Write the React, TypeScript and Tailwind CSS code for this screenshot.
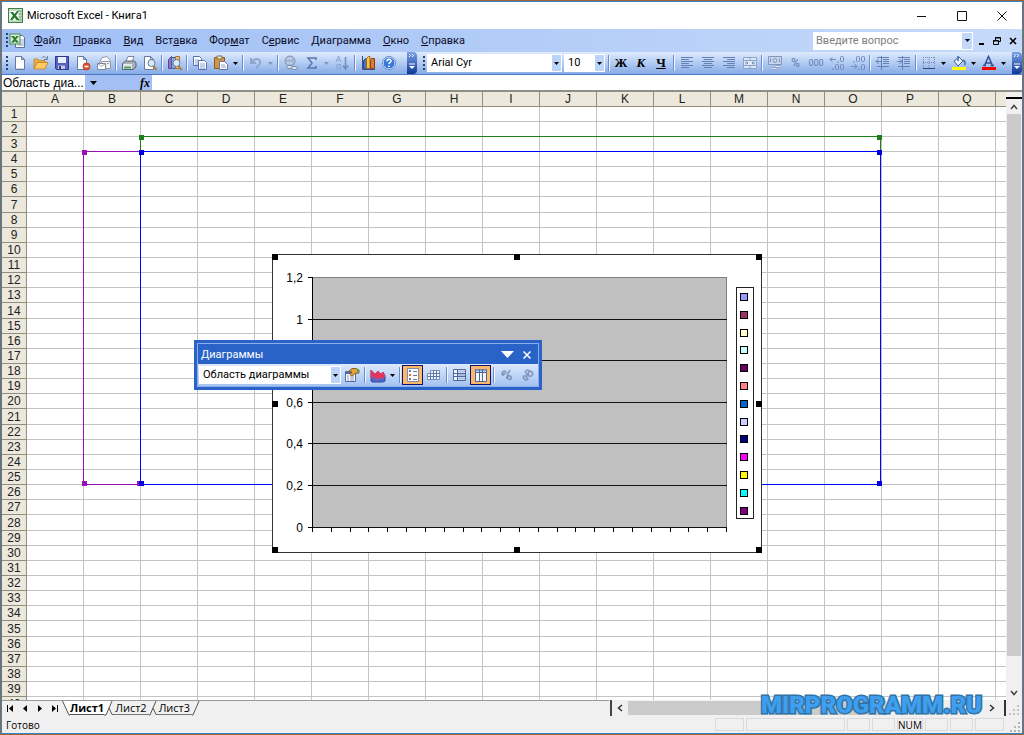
import { useState } from "react";
import type { ReactNode } from "react";

const columns = "ABCDEFGHIJKLMNOPQ".split("");
const rows = Array.from({ length: 40 }, (_, i) => i + 1);

// Every menu has one underlined access key
const menus = [
  { before: "", key: "Ф", after: "айл" },
  { before: "", key: "П", after: "равка" },
  { before: "", key: "В", after: "ид" },
  { before: "Вст", key: "а", after: "вка" },
  { before: "Фор", key: "м", after: "ат" },
  { before: "С", key: "е", after: "рвис" },
  { before: "", key: "Д", after: "иаграмма" },
  { before: "", key: "О", after: "кно" },
  { before: "", key: "С", after: "правка" },
];

const legendColors = [
  "#9999ff",
  "#993366",
  "#ffffcc",
  "#ccffff",
  "#660066",
  "#ff8080",
  "#0066cc",
  "#ccccff",
  "#000080",
  "#ff00ff",
  "#ffff00",
  "#00ffff",
  "#800080",
];

const axisLabels = [
  { text: "1,2", y: 24 },
  { text: "1", y: 66 },
  { text: "0,8", y: 107 },
  { text: "0,6", y: 149 },
  { text: "0,4", y: 190 },
  { text: "0,2", y: 232 },
  { text: "0", y: 274 },
];

const sheetNav = [
  { label: "Первый лист", arrow: "M7 1L3 4.500 7 8z", bar: "M1.500 1v7" },
  { label: "Предыдущий лист", arrow: "M6 1L2 4.500 6 8z", bar: "" },
  { label: "Следующий лист", arrow: "M2 1l4 3.500L2 8z", bar: "" },
  { label: "Последний лист", arrow: "M1 1l4 3.500L1 8z", bar: "M6.500 1v7" },
];

function Icon({ children }: { children: ReactNode }) {
  return (
    <svg width="16" height="16" viewBox="0 0 16 16" fill="none" aria-hidden="true">
      {children}
    </svg>
  );
}

function ToolButton({
  label,
  children,
  active,
}: {
  label: string;
  children: ReactNode;
  active?: boolean;
}) {
  return (
    <button
      type="button"
      aria-label={label}
      className={`flex h-5 w-[21px] shrink-0 items-center justify-center ${
        active ? "border border-[#10107a] bg-[#fdb765]" : ""
      }`}
    >
      {children}
    </button>
  );
}

function ArrowButton({ label, muted }: { label: string; muted?: boolean }) {
  return (
    <button
      type="button"
      aria-label={label}
      className={`flex h-5 w-[9px] shrink-0 items-center justify-center ${
        muted ? "text-[#8296b8]" : "text-black"
      }`}
    >
      <svg width="5" height="3" viewBox="0 0 5 3" aria-hidden="true">
        <path d="M0 0h5L2.500 3z" fill="currentColor" />
      </svg>
    </button>
  );
}

function Separator({ wide }: { wide?: boolean }) {
  return (
    <div className={`flex shrink-0 justify-center ${wide ? "w-[5px]" : "w-1"}`}>
      <div className="h-4 w-px bg-[#6a8ccb]" />
      <div className="h-4 w-px bg-[#f1f7ff]" />
    </div>
  );
}

function Gripper() {
  return (
    <svg width="3" height="15" viewBox="0 0 3 15" className="shrink-0" aria-hidden="true">
      <path
        d="M1 0v2M1 4v2M1 8v2M1 12v2"
        stroke="#27416f"
        strokeWidth="2"
      />
    </svg>
  );
}

function OverflowCap({ label }: { label: string }) {
  return (
    <button
      type="button"
      aria-label={label}
      className="flex h-full w-[10px] shrink-0 items-end justify-center rounded-r-sm bg-linear-to-b from-[#7ba2e7] to-[#0f3795] pb-1"
    >
      <svg width="6" height="16" viewBox="0 0 6 16" aria-hidden="true">
        <path d="M0 0l1.500 1.500L0 3M3 0l1.500 1.500L3 3" stroke="#fff" fill="none" />
        <path d="M0 10h6" stroke="#fff" />
        <path d="M0 12h6l-3 3z" fill="#fff" />
      </svg>
    </button>
  );
}

function ComboBox({
  label,
  options,
  className,
}: {
  label: string;
  options: string[];
  className: string;
}) {
  return (
    <div className={`relative h-[18px] shrink-0 bg-white ${className}`}>
      <select
        aria-label={label}
        className="block h-full w-full appearance-none bg-transparent pr-3 pl-1 text-[11px] leading-4 text-black outline-none"
      >
        {options.map((option) => (
          <option key={option}>{option}</option>
        ))}
      </select>
      <div className="pointer-events-none absolute inset-y-px right-px flex w-[9px] items-center justify-center bg-[#bcd4f8]">
        <svg width="5" height="3" viewBox="0 0 5 3" aria-hidden="true">
          <path d="M0 0h5L2.500 3z" />
        </svg>
      </div>
    </div>
  );
}

function ExcelLogo() {
  return (
    <svg width="15" height="15" viewBox="0 0 15 15" aria-hidden="true">
      <rect x="0.500" y="0.500" width="14" height="14" fill="#c5dcc4" stroke="#3f8149" />
      <path d="M10 3h4M10 6h4M10 9h4M10 12h4" stroke="#73a879" />
      <rect x="1.500" y="3" width="9" height="9" fill="#fff" />
      <path d="M2 4h3l1.500 2L9 3h2L8 7.500l3.500 4.500h-3L6.500 9.500 4.500 12H2l3-4.500z" fill="#227a32" />
    </svg>
  );
}

function Page() {
  return (
    <path
      d="M3.500 1.500h6l3 3v10h-9zM9.500 1.500v3h3"
      fill="#fff"
      stroke="#6579a3"
    />
  );
}

function Magnifier() {
  return (
    <>
      <path d="M11.500 11l3 4" stroke="#b8752d" strokeWidth="2" />
      <circle cx="9.500" cy="8" r="3.500" fill="#d5ebfb" stroke="#6b7a90" />
    </>
  );
}

function AlignIcon({ d }: { d: string }) {
  return (
    <Icon>
      <path d={d} stroke="#6580b4" />
    </Icon>
  );
}

function TitleBar() {
  return (
    <header className="flex h-[27px] items-center bg-white pl-[6px]">
      <ExcelLogo />
      <h1 className="ml-1 flex-1 text-[11px] leading-4 text-black">
        Microsoft Excel - Книга1
      </h1>
      <button type="button" aria-label="Свернуть" className="flex h-full w-10 items-center justify-center">
        <svg width="10" height="10" viewBox="0 0 10 10" aria-hidden="true">
          <path d="M0 5.500h9" stroke="#111" />
        </svg>
      </button>
      <button type="button" aria-label="Развернуть" className="flex h-full w-10 items-center justify-center">
        <svg width="10" height="10" viewBox="0 0 10 10" fill="none" aria-hidden="true">
          <path d="M0.500 0.500h9v9h-9z" stroke="#111" />
        </svg>
      </button>
      <button type="button" aria-label="Закрыть" className="flex h-full w-10 items-center justify-center">
        <svg width="10" height="10" viewBox="0 0 10 10" aria-hidden="true">
          <path d="M0.500 0.500l9 9M9.500 0.500l-9 9" stroke="#111" />
        </svg>
      </button>
    </header>
  );
}

function MenuBar() {
  return (
    <div className="flex h-[23px] items-center bg-linear-to-r from-[#a0bff5] to-[#c6dafa] pl-1">
      <Gripper />
      <svg width="17" height="16" viewBox="0 0 17 16" fill="none" aria-hidden="true">
        <path d="M6.500 2.500h7l2 2v10h-9z" fill="#fff" stroke="#5b719f" />
        <path d="M12 6v7M14 6v7M8 12h6" stroke="#9db0d3" />
        <rect x="1" y="1" width="10" height="10" fill="#d8ecd5" stroke="#4a8a54" />
        <path d="M2 3h3l1 1.500L7.500 3H10L7 6.200 10 9.500H7L6 8 5 9.500H2L4.800 6.200z" fill="#277a37" />
      </svg>
      <nav className="ml-2 flex flex-1 gap-3">
        {menus.map((menu) => (
          <button
            type="button"
            key={menu.key + menu.after}
            className="shrink-0 text-[11px] leading-4 text-[#0a0a28]"
          >
            {menu.before}
            <span className="underline">{menu.key}</span>
            {menu.after}
          </button>
        ))}
      </nav>
      <div className="flex h-[18px] w-[160px] bg-white">
        <input
          type="text"
          aria-label="Введите вопрос"
          placeholder="Введите вопрос"
          className="min-w-0 flex-1 pl-[3px] text-[11px] leading-4 outline-none placeholder:text-[#808080]"
        />
        <button
          type="button"
          aria-label="Список вопросов"
          className="m-px flex w-[10px] items-center justify-center bg-[#c3d8f8]"
        >
          <svg width="5" height="3" viewBox="0 0 5 3" aria-hidden="true">
            <path d="M0 0h5L2.500 3z" />
          </svg>
        </button>
      </div>
      <button type="button" aria-label="Свернуть книгу" className="flex h-4 w-4 items-center justify-center">
        <svg width="7" height="8" viewBox="0 0 7 8" aria-hidden="true">
          <path d="M1 7h5" stroke="#000" strokeWidth="2" />
        </svg>
      </button>
      <button type="button" aria-label="Восстановить книгу" className="flex h-4 w-4 items-center justify-center">
        <svg width="8" height="8" viewBox="0 0 8 8" fill="none" aria-hidden="true">
          <path d="M2.500 3V0.500h5v4H6M2 1h6M0.500 3.500h5v4h-5zM0 4h6" stroke="#000" />
        </svg>
      </button>
      <button type="button" aria-label="Закрыть книгу" className="mr-px flex h-4 w-4 items-center justify-center">
        <svg width="8" height="8" viewBox="0 0 8 8" aria-hidden="true">
          <path d="M1 1l6 6M7 1L1 7" stroke="#000" strokeWidth="1.600" />
        </svg>
      </button>
    </div>
  );
}

function StandardToolbar() {
  return (
    <div className="flex h-full shrink-0 items-center pl-1">
      <Gripper />
      <ToolButton label="Создать">
        <Icon>
          <Page />
          <path d="M4.500 13.500h7" stroke="#c4d0e6" />
        </Icon>
      </ToolButton>
      <ToolButton label="Открыть">
        <Icon>
          <path d="M1 14V4h4l1 1.500h6V8" fill="#e9ae4a" stroke="#c48a38" />
          <path d="M1 14l3-6.500h11L12 14z" fill="#ffcb62" stroke="#c48a38" />
          <path d="M8.500 3c2-2 4-1.500 5 .5M14.500 1v3.500H11" stroke="#6d7fa6" />
        </Icon>
      </ToolButton>
      <ToolButton label="Сохранить">
        <Icon>
          <path d="M1.500 1.500h13v13h-12l-1-1z" fill="#5560c2" stroke="#31398c" />
          <path d="M4 2h8v6H4z" fill="#e8efff" />
          <path d="M4 10.500h7V14H4z" fill="#c3c8e0" />
          <path d="M5 11h2v3H5z" fill="#333b83" />
        </Icon>
      </ToolButton>
      <ToolButton label="Разрешения">
        <Icon>
          <path d="M2.500 1.500h6l3 3v10h-9zM8.500 1.500v3h3" fill="#fff" stroke="#6579a3" />
          <circle cx="11.500" cy="11.500" r="3.500" fill="#d9502b" stroke="#b94a2a" />
          <path d="M9.500 11.500h4" stroke="#fff" strokeWidth="1.500" />
        </Icon>
      </ToolButton>
      <ToolButton label="Сообщение">
        <Icon>
          <path d="M3.500 8L6 2.500l5-1 3.500 4.500" fill="#fff" stroke="#8f99aa" />
          <path d="M5.500 6.500h9v7h-9z" fill="#f2f2ee" stroke="#8f99aa" />
          <path d="M11 8.500h2" stroke="#8f99aa" />
          <path d="M1.500 8.500h8v6h-8z" fill="#fff" stroke="#7d8798" />
          <path d="M1.500 8.500l4 3 4-3" stroke="#9aa4b5" />
        </Icon>
      </ToolButton>
      <Separator />
      <ToolButton label="Печать">
        <Icon>
          <path d="M5 6l2-4.500h6L11.500 6" fill="#fff" stroke="#7785a2" />
          <path d="M1.500 8.500l3-2.500h9l1.500 2v4l-3 2.500H1.500z" fill="#a9b0bb" stroke="#56606f" />
          <path d="M2 9h9v5H2z" fill="#e3e7ed" />
          <path d="M3 12.500h7" stroke="#49a35a" strokeWidth="2" />
        </Icon>
      </ToolButton>
      <ToolButton label="Предварительный просмотр">
        <Icon>
          <path d="M2.500 1.500h6l3 3v10h-9zM8.500 1.500v3h3" fill="#fff" stroke="#6579a3" />
          <Magnifier />
        </Icon>
      </ToolButton>
      <Separator />
      <ToolButton label="Справочные материалы">
        <Icon>
          <path d="M1.500 4.500l3-3v12h-3z" fill="#9473c4" stroke="#5d4690" />
          <path d="M4.500 2.500h4v11h-4z" fill="#84a8e4" stroke="#42639d" />
          <path d="M8.500 1.500h4v12h-4z" fill="#f0c070" stroke="#a27537" />
          <Magnifier />
        </Icon>
      </ToolButton>
      <Separator />
      <ToolButton label="Копировать">
        <Icon>
          <path d="M1.500 1.500h6l2 2v7h-8z" fill="#fff" stroke="#5672ae" />
          <path d="M3 5h4M3 7h4M3 9h3" stroke="#8ba4d4" />
          <path d="M6.500 5.500h6l2 2v7h-8z" fill="#fff" stroke="#5672ae" />
          <path d="M8 9h5M8 11h5M8 13h5" stroke="#8ba4d4" />
        </Icon>
      </ToolButton>
      <ToolButton label="Вставить">
        <Icon>
          <path d="M1.500 2.500h10v11h-10z" fill="#d39645" stroke="#8e5b22" />
          <path d="M4 1h5v3H4z" fill="#e8e3c3" stroke="#7e7452" />
          <path d="M6.500 6.500h5l3 3v5h-8z" fill="#fff" stroke="#6176a6" />
          <path d="M8 10h4M8 12h5" stroke="#8ba4d4" />
        </Icon>
      </ToolButton>
      <ArrowButton label="Параметры вставки" />
      <Separator wide />
      <ToolButton label="Отменить">
        <Icon>
          <path d="M3 3v5h5" stroke="#8ea6cf" strokeWidth="2" />
          <path d="M4 7c4-5 9-3 8 1-.5 2-2 3-4 5" stroke="#8ea6cf" strokeWidth="2" />
        </Icon>
      </ToolButton>
      <ArrowButton label="История отмены" muted />
      <Separator wide />
      <ToolButton label="Гиперссылка">
        <Icon>
          <circle cx="7" cy="6" r="5" fill="#a5b7d4" stroke="#8497b8" />
          <path d="M4 4c2-2 4 0 5-1M4 8c2-1 3 1 5 0" stroke="#dde6f4" />
          <rect x="3.500" y="10.500" width="6" height="3" rx="1.500" fill="#d7e0ee" stroke="#7b8eae" />
          <rect x="8.500" y="11.500" width="6" height="3" rx="1.500" fill="#d7e0ee" stroke="#7b8eae" />
        </Icon>
      </ToolButton>
      <ToolButton label="Автосумма">
        <Icon>
          <path d="M12 5V3H4l4 5-4 5h8v-2" stroke="#5a76ad" strokeWidth="1.500" />
        </Icon>
      </ToolButton>
      <ArrowButton label="Функции" muted />
      <ToolButton label="Сортировка">
        <Icon>
          <path d="M2 7l2.500-6L7 7M3 5h3" stroke="#8ba2cd" />
          <path d="M6.500 15V9.500H4a1.500 1.500 0 000 3h2.500M4 12.500L2 15" stroke="#8ba2cd" />
          <path d="M11.500 2v11M9 10.500l2.500 3.500 2.500-3.500" stroke="#6f8cc0" strokeWidth="1.500" />
        </Icon>
      </ToolButton>
      <Separator wide />
      <ToolButton label="Мастер диаграмм">
        <Icon>
          <path d="M2.500 1v13.500H15" stroke="#35508c" />
          <path d="M3.500 5.500l2-2h1v10h-3z" fill="#4a73c5" stroke="#2e4c8f" />
          <path d="M6.500 3.500l2-2h1.500v12H6.500z" fill="#f4c34a" stroke="#9b6b1e" />
          <path d="M10.500 5.500l1-2h3v10h-4z" fill="#df7a2e" stroke="#8e3c16" />
        </Icon>
      </ToolButton>
      <ToolButton label="Справка">
        <Icon>
          <circle cx="8" cy="8" r="6" fill="#3b78d8" stroke="#fff" />
          <circle cx="8" cy="8" r="6.500" stroke="#5a86cf" />
          <path d="M6 6.500c0-3 4-3 4-.5 0 1.500-2 1.500-2 3M8 10.500V12" stroke="#fff" strokeWidth="1.500" />
        </Icon>
      </ToolButton>
      <div className="ml-2 h-full">
        <OverflowCap label="Параметры панели Стандартная" />
      </div>
    </div>
  );
}

function FormattingToolbar() {
  return (
    <div className="flex h-full min-w-0 flex-1 items-center pl-[6px]">
      <Gripper />
      <ComboBox label="Шрифт" options={["Arial Cyr", "Arial", "Tahoma"]} className="ml-px w-[135px]" />
      <ComboBox label="Размер" options={["10", "11", "12", "14"]} className="mx-[2px] w-[41px]" />
      <Separator />
      <button type="button" aria-label="Полужирный" className="w-5 shrink-0 font-['Liberation_Serif'] text-[13px] leading-4 font-black">
        Ж
      </button>
      <button type="button" aria-label="Курсив" className="w-5 shrink-0 font-['Liberation_Serif'] text-[13px] leading-4 font-bold italic">
        К
      </button>
      <button type="button" aria-label="Подчеркнутый" className="w-5 shrink-0 font-['Liberation_Serif'] text-[13px] leading-4 font-bold underline">
        Ч
      </button>
      <Separator wide />
      <ToolButton label="По левому краю">
        <AlignIcon d="M2 2.500h12M2 4.500h8M2 6.500h12M2 8.500h8M2 10.500h12M2 12.500h8" />
      </ToolButton>
      <ToolButton label="По центру">
        <AlignIcon d="M2 2.500h12M4 4.500h8M2 6.500h12M4 8.500h8M2 10.500h12M4 12.500h8" />
      </ToolButton>
      <ToolButton label="По правому краю">
        <AlignIcon d="M2 2.500h12M6 4.500h8M2 6.500h12M6 8.500h8M2 10.500h12M6 12.500h8" />
      </ToolButton>
      <ToolButton label="Объединить и поместить в центре">
        <Icon>
          <path d="M1.500 2.500h13v11h-13zM1.500 5.500h13M1.500 10.500h13M8 2.500v3M8 10.500v3" fill="#dfe8f6" stroke="#8da2c8" />
          <path d="M3 8h3M10 8h3M4.500 6.500L6 8 4.500 9.500M11.500 6.500L10 8l1.500 1.500" stroke="#7089ba" />
        </Icon>
      </ToolButton>
      <Separator />
      <ToolButton label="Денежный формат">
        <Icon>
          <path d="M1.500 1.500h13v8h-13z" fill="#c9d6ec" stroke="#7f96c1" />
          <circle cx="8" cy="5.500" r="2" stroke="#7f96c1" />
          <path d="M3.500 3.500v4M12.500 3.500v4" stroke="#7f96c1" />
          <ellipse cx="11" cy="11.500" rx="3" ry="1" fill="#eef3fa" stroke="#8ea3c9" />
          <ellipse cx="7" cy="13.500" rx="3" ry="1" fill="#eef3fa" stroke="#8ea3c9" />
        </Icon>
      </ToolButton>
      <button type="button" aria-label="Процентный формат" className="w-[21px] shrink-0 text-[12px] leading-4 text-[#5f7cb3]">
        %
      </button>
      <button type="button" aria-label="Формат с разделителями" className="w-5 shrink-0 text-[9px] leading-4 text-[#5f7cb3]">
        000
      </button>
      <ToolButton label="Увеличить разрядность">
        <Icon>
          <path d="M1 4.500h6M3.500 2L1 4.500 3.500 7M9 6v2" stroke="#7089ba" />
          <rect x="11.500" y="1.500" width="3" height="5" rx="1" stroke="#7089ba" />
          <path d="M4 13v2" stroke="#7089ba" />
          <rect x="6.500" y="9.500" width="3" height="5" rx="1" stroke="#7089ba" />
          <rect x="11.500" y="9.500" width="3" height="5" rx="1" stroke="#7089ba" />
        </Icon>
      </ToolButton>
      <ToolButton label="Уменьшить разрядность">
        <Icon>
          <path d="M1 11.500h6M4.500 9L7 11.500 4.500 14M9 13v2M4 6v2" stroke="#7089ba" />
          <rect x="6.500" y="1.500" width="3" height="5" rx="1" stroke="#7089ba" />
          <rect x="11.500" y="1.500" width="3" height="5" rx="1" stroke="#7089ba" />
          <rect x="11.500" y="9.500" width="3" height="5" rx="1" stroke="#7089ba" />
        </Icon>
      </ToolButton>
      <Separator />
      <ToolButton label="Уменьшить отступ">
        <AlignIcon d="M2 2.500h12M8 4.500h6M8 6.500h6M8 8.500h6M2 11.500h12M1 6.500h5M3.500 4L1 6.500 3.500 9M6.500 1v14" />
      </ToolButton>
      <ToolButton label="Увеличить отступ">
        <AlignIcon d="M2 2.500h12M8 4.500h6M8 6.500h6M8 8.500h6M2 11.500h12M1 6.500h5M3.500 4L6 6.500 3.500 9M6.500 1v14" />
      </ToolButton>
      <Separator />
      <ToolButton label="Границы">
        <Icon>
          <path d="M2.500 2v11M13.500 2v11M8 2v11M2 2.500h12M2 7.500h12" stroke="#7a8cab" strokeDasharray="1 1" />
          <path d="M2 13.500h12" stroke="#36486c" />
        </Icon>
      </ToolButton>
      <ArrowButton label="Виды границ" />
      <ToolButton label="Цвет заливки">
        <Icon>
          <path d="M3 6l5-4 4 4-5 5z" fill="#e4edf9" stroke="#4b6187" />
          <path d="M7 1v5M12 5c2 1 2.500 3 1.500 5" stroke="#3f6db5" strokeWidth="1.500" />
          <path d="M1 12h14v3H1z" fill="#ffff00" />
        </Icon>
      </ToolButton>
      <ArrowButton label="Цвета заливки" />
      <ToolButton label="Цвет шрифта">
        <Icon>
          <path d="M3.500 10.500L7.500 1.500l4 9M5 8h5M2 10.500h3M9.500 10.500H13" stroke="#2f4f95" strokeWidth="1.500" />
          <path d="M1 12h14v3H1z" fill="#ff0000" />
        </Icon>
      </ToolButton>
      <ArrowButton label="Цвета шрифта" />
      <div className="ml-auto h-full">
        <OverflowCap label="Параметры панели Форматирование" />
      </div>
    </div>
  );
}

function FormulaBar() {
  const [formula, setFormula] = useState("");

  return (
    <div className="flex h-[15px] bg-white">
      <input
        type="text"
        aria-label="Имя"
        defaultValue="Область диа..."
        className="w-[83px] bg-white pl-px font-['Liberation_Sans'] text-[12px] leading-4 outline-none"
      />
      <div className="flex w-[67px] items-center justify-between bg-[#a3bff3] pr-[2px] pl-1">
        <button type="button" aria-label="Список имен" className="px-px">
          <svg width="7" height="4" viewBox="0 0 7 4" aria-hidden="true">
            <path d="M0 0h7L3.500 4z" />
          </svg>
        </button>
        <button
          type="button"
          aria-label="Вставка функции"
          className="font-['Liberation_Serif'] text-[12px] leading-[14px] font-bold italic"
        >
          fx
        </button>
      </div>
      <input
        type="text"
        aria-label="Строка формул"
        value={formula}
        onChange={(e) => setFormula(e.target.value)}
        className="min-w-0 flex-1 bg-white px-1 text-[12px] outline-none"
      />
    </div>
  );
}

function Sheet() {
  return (
    <table className="w-[1051px] table-fixed border-separate border-spacing-0 border-t-2 border-[#8f8f88] font-['Liberation_Sans'] text-[12px] leading-[14px]">
      <colgroup>
        <col className="w-[25px]" />
        {columns.map((column) => (
          <col key={column} className="w-[57px]" />
        ))}
        <col className="w-[57px]" />
      </colgroup>
      <thead>
        <tr className="h-[15px] bg-[#ece9dc]">
          <td className="border-r border-b border-[#8f8f80]" />
          {columns.map((column) => (
            <th key={column} scope="col" className="border-r border-b border-[#8f8f80] p-0 font-normal text-[#222]">
              {column}
            </th>
          ))}
          <td className="border-b border-[#8f8f80]" />
        </tr>
      </thead>
      <tbody>
        {rows.map((row) => (
          <tr key={row} className={row % 7 === 0 ? "h-4" : "h-[15px]"}>
            <th scope="row" className="border-r border-b border-[#8f8f80] bg-[#ece9dc] p-0 text-center font-normal text-[#222]">
              {row}
            </th>
            {columns.map((column) => (
              <td key={column} className="border-r border-b border-[#c4c4c4] p-0" />
            ))}
            <td className="border-b border-[#c4c4c4] p-0" />
          </tr>
        ))}
      </tbody>
    </table>
  );
}

// Coloured frames that mark the chart's source cells
function SourceRanges() {
  return (
    <>
      <div className="absolute top-[61px] left-[81px] h-[334px] w-[58px] border border-[#9a10b8]">
        <span className="absolute -top-0.5 -left-0.5 size-[5px] bg-[#9a10b8]" />
        <span className="absolute -bottom-0.5 -left-0.5 size-[5px] bg-[#9a10b8]" />
        <span className="absolute -right-0.5 -bottom-0.5 size-[5px] bg-[#9a10b8]" />
      </div>
      <div className="absolute top-[46px] left-[138px] h-4 w-[741px] border border-[#1b7f1b]">
        <span className="absolute -top-0.5 -left-0.5 size-[5px] bg-[#1b7f1b]" />
        <span className="absolute -top-0.5 -right-0.5 size-[5px] bg-[#1b7f1b]" />
      </div>
      <div className="absolute top-[61px] left-[138px] h-[334px] w-[741px] border border-[#0000ff]">
        <span className="absolute -top-0.5 -left-0.5 size-[5px] bg-[#0000e0]" />
        <span className="absolute -top-0.5 -right-0.5 size-[5px] bg-[#0000e0]" />
        <span className="absolute -bottom-0.5 -left-0.5 size-[5px] bg-[#0000e0]" />
        <span className="absolute -right-0.5 -bottom-0.5 size-[5px] bg-[#0000e0]" />
      </div>
    </>
  );
}

function Chart() {
  const ticks = Array.from({ length: 23 }, (_, i) => Math.round(40 + (i * 414) / 22) + 0.5);
  const handles = [
    [0, 0],
    [242, 0],
    [484, 0],
    [0, 147],
    [484, 147],
    [0, 293],
    [242, 293],
    [484, 293],
  ];

  return (
    <svg
      width="490"
      height="299"
      viewBox="0 0 490 299"
      className="absolute top-[164px] left-[270px]"
      role="img"
      aria-label="Область диаграммы"
    >
      <rect x="0.500" y="0.500" width="489" height="298" fill="#fff" stroke="#333" />
      <rect x="40.500" y="23.500" width="414" height="250" fill="#c0c0c0" stroke="#808080" />
      {axisLabels.map((label) => (
        <g key={label.text}>
          <path d={`M36 ${label.y - 0.5}h5`} stroke="#000" />
          {label.y > 24 && <path d={`M40 ${label.y - 0.5}h415`} stroke="#111" />}
          <text
            x="31"
            y={label.y + 4}
            textAnchor="end"
            className="font-['Liberation_Sans'] text-[12px]"
          >
            {label.text}
          </text>
        </g>
      ))}
      <path d="M40.500 24v250" stroke="#000" />
      {ticks.map((x) => (
        <path key={x} d={`M${x} 274v4`} stroke="#000" />
      ))}
      <rect x="464.500" y="33.500" width="17" height="231" fill="#fff" stroke="#222" />
      {legendColors.map((color, i) => (
        <rect
          key={color}
          x="468.500"
          y={Math.round(39 + i * 17.8) + 0.5}
          width="7"
          height="7"
          fill={color}
          stroke="#000"
        />
      ))}
      {handles.map(([x, y]) => (
        <rect key={`${x}-${y}`} x={x} y={y} width="6" height="6" fill="#000" />
      ))}
    </svg>
  );
}

function ChartToolbar() {
  return (
    <section
      aria-label="Диаграммы"
      className="absolute top-[250px] left-[192px] w-[348px] border-[3px] border-[#2a63c8] bg-[#2a63c8]"
    >
      <div className="border border-[#88aeee]">
        <div className="flex h-5 items-center bg-[#2a63c8] pt-px pl-[3px] text-white">
          <h2 className="flex-1 text-[11px] leading-4">Диаграммы</h2>
          <button type="button" aria-label="Параметры панели" className="flex w-5 justify-center">
            <svg width="13" height="7" viewBox="0 0 13 7" aria-hidden="true">
              <path d="M0 0h13L6.500 7z" fill="#fff" />
            </svg>
          </button>
          <button type="button" aria-label="Закрыть панель" className="mr-px flex w-5 justify-center">
            <svg width="8" height="8" viewBox="0 0 8 8" aria-hidden="true">
              <path d="M0.500 0.500l7 7M7.500 0.500l-7 7" stroke="#fff" strokeWidth="1.500" />
            </svg>
          </button>
        </div>
        <div className="flex h-[22px] items-center bg-linear-to-b from-[#dce9fd] to-[#a4c2f0] pl-px">
          <ComboBox
            label="Элементы диаграммы"
            options={["Область диаграммы", "Область построения", "Легенда"]}
            className="w-[142px]"
          />
          <ToolButton label="Формат области диаграммы">
            <Icon>
              <path d="M1.500 4.500h10v10h-10z" fill="#fff" stroke="#4d6ba5" />
              <path d="M1.500 6h10" stroke="#4d6ba5" strokeWidth="2" />
              <path d="M3 9h2M6 9h4M3 11h2M6 11h4M3 13h2M6 13h4" stroke="#8197c0" />
              <path d="M5 4l3-2.500h4l3 1.500v3l-4 .5L8 9 6 7.500 8 5z" fill="#e8a43a" stroke="#8d6120" />
              <path d="M13 2h2v4h-2z" fill="#58a065" />
            </Icon>
          </ToolButton>
          <Separator wide />
          <ToolButton label="Тип диаграммы">
            <Icon>
              <path d="M1 3l4 4 3-3 3 3 2-2 2 4v5l-2 1H2l-1-1z" fill="#4c68d0" stroke="#34489a" />
              <path d="M1 3l4 4 3-3 3 3 2-2 2 4-3 3-2-2-3 3-3-4-3 2z" fill="#e4345c" stroke="#d04468" />
            </Icon>
          </ToolButton>
          <ArrowButton label="Типы диаграмм" />
          <Separator wide />
          <ToolButton label="Легенда" active>
            <Icon>
              <path d="M2.500 1.500h11v13h-11z" fill="#fff" stroke="#7c8cab" />
              <path d="M4 3h2v2H4z" fill="#5577d8" />
              <path d="M4 7h2v2H4z" fill="#e06b3a" />
              <path d="M4 11h2v2H4z" fill="#7c60b4" />
              <path d="M8 4.500h4M8 8.500h4M8 12.500h4" stroke="#6e7f9e" />
            </Icon>
          </ToolButton>
          <ToolButton label="Таблица данных">
            <Icon>
              <path d="M4.500 3.500h9v9h-12v-6h3z" fill="#f2f6fd" stroke="#7b8fb8" />
              <path d="M4.500 6.500h9M1.500 9.500h12M4.500 6.500v6M7.500 3.500v9M10.500 3.500v9" stroke="#6177a5" />
            </Icon>
          </ToolButton>
          <Separator wide />
          <ToolButton label="По строкам">
            <Icon>
              <path d="M1.500 2.500h12v11h-12z" fill="#f2f6fd" stroke="#4f6798" />
              <path d="M6 4.500h7M6 8h7M6 11.500h7" stroke="#a9bee2" strokeWidth="2" />
              <path d="M1.500 6.500h12M1.500 9.500h12M5.500 2.500v11" stroke="#4f6798" />
            </Icon>
          </ToolButton>
          <ToolButton label="По столбцам" active>
            <Icon>
              <path d="M2.500 2.500h11v12h-11z" fill="#f2f6fd" stroke="#4f6798" />
              <path d="M3 3.500h10" stroke="#8fa9d8" strokeWidth="2" />
              <path d="M2.500 5.500h11M6.500 2.500v12M9.500 2.500v12" stroke="#4f6798" />
            </Icon>
          </ToolButton>
          <Separator wide />
          <ToolButton label="Текст сверху вниз">
            <Icon>
              <path d="M3 7c0-3 3-4 4-2L4.500 8C2 8 3 5.500 5.500 7M8 8l3-5M8 12c-1-3 2-5 4-2M9 9c2-1 4 1 3 3-2 1-4 0-3-3" stroke="#7e95bf" strokeWidth="1.500" />
            </Icon>
          </ToolButton>
          <ToolButton label="Текст снизу вверх">
            <Icon>
              <path d="M4 12c-2-2 0-4 2-3l2 3c-2 2-4 1-3-1M8 9L5 4M9 9C7 6 10 3 12 5c2 3-1 5-3 4M6 3l4 1" stroke="#7e95bf" strokeWidth="1.500" />
            </Icon>
          </ToolButton>
        </div>
      </div>
    </section>
  );
}

function VerticalScrollbar() {
  return (
    <div className="flex w-4 shrink-0 flex-col bg-[#f0f0f0]">
      <div className="h-[9px] border-t-2 border-b-2 border-t-[#8f8f88] border-b-black bg-[#f0f0f0]" />
      <button type="button" aria-label="Вверх" className="flex h-[15px] items-center justify-center">
        <svg width="8" height="6" viewBox="0 0 8 6" fill="none" aria-hidden="true">
          <path d="M1 5l3-3.500L7 5" stroke="#444" strokeWidth="1.500" />
        </svg>
      </button>
      <div className="mx-px h-0 flex-[543] bg-[#cbcbcb]" />
      <div className="h-0 flex-[29]" />
      <button type="button" aria-label="Вниз" className="flex h-[15px] items-center justify-center">
        <svg width="8" height="6" viewBox="0 0 8 6" fill="none" aria-hidden="true">
          <path d="M1 1l3 3.500L7 1" stroke="#444" strokeWidth="1.500" />
        </svg>
      </button>
    </div>
  );
}

function SheetTabs() {
  return (
    <div className="flex h-4 bg-[#f0f0f0] font-['Open_Sans']">
      <div className="flex w-[607px] shrink-0 border-t border-[#9a9a9a]">
        {sheetNav.map((nav) => (
          <button
            type="button"
            key={nav.label}
            aria-label={nav.label}
            className="flex w-[15px] items-center justify-center"
          >
            <svg width="8" height="9" viewBox="0 0 8 9" aria-hidden="true">
              <path d={nav.arrow} />
              <path d={nav.bar} stroke="#000" />
            </svg>
          </button>
        ))}
        <svg width="8" height="15" viewBox="0 0 8 15" aria-hidden="true">
          <path d="M0 0h8v14H7z" fill="#fff" />
          <path d="M0.500 0L7 14h1" stroke="#555" fill="none" />
        </svg>
        <button type="button" className="h-[14px] border-b border-[#555] bg-white text-[11px] leading-[13px] font-bold text-black">
          Лист1
        </button>
        <svg width="9" height="15" viewBox="0 0 9 15" aria-hidden="true">
          <path d="M0 0h8L2 14H0z" fill="#fff" />
          <path d="M8 0L2 14H0M5 7l3 6.500h1" stroke="#555" fill="none" />
        </svg>
        <button type="button" className="h-[14px] border-b border-[#777] px-[2px] text-[11px] leading-[13px] text-black">
          Лист2
        </button>
        <svg width="8" height="15" viewBox="0 0 8 15" aria-hidden="true">
          <path d="M7 0L1 14H0M4 7l3 6.500h1" stroke="#555" fill="none" />
        </svg>
        <button type="button" className="h-[14px] border-b border-[#777] px-[2px] text-[11px] leading-[13px] text-black">
          Лист3
        </button>
        <svg width="8" height="15" viewBox="0 0 8 15" aria-hidden="true">
          <path d="M7 0L1 14H0" stroke="#555" fill="none" />
        </svg>
      </div>
      <div className="w-[3px] border-r-2 border-[#444]" />
      <button type="button" aria-label="Влево" className="flex w-4 items-center justify-center">
        <svg width="6" height="8" viewBox="0 0 6 8" fill="none" aria-hidden="true">
          <path d="M5 1L1.500 4 5 7" stroke="#333" strokeWidth="1.500" />
        </svg>
      </button>
      <div className="my-px flex-[258] bg-[#cbcbcb]" />
      <div className="flex-[98]" />
      <button type="button" aria-label="Вправо" className="flex w-4 items-center justify-center">
        <svg width="6" height="8" viewBox="0 0 6 8" fill="none" aria-hidden="true">
          <path d="M1 1l3.500 3L1 7" stroke="#333" strokeWidth="1.500" />
        </svg>
      </button>
      <div className="w-[6px] border-r-2 border-[#333]" />
      <svg width="16" height="16" viewBox="0 0 16 16" aria-hidden="true">
        <path d="M11 5h2v2h-2zM7 9h2v2H7zM11 9h2v2h-2zM3 13h2v2H3zM7 13h2v2H7zM11 13h2v2h-2z" fill="#c2c2c2" />
      </svg>
    </div>
  );
}

function StatusBar() {
  return (
    <footer className="flex h-[17px] items-center gap-[2px] bg-[#f0f0f0] font-['Open_Sans'] text-[10px] leading-[12px] text-black">
      <p className="flex-1 pl-1">Готово</p>
      <div className="h-[13px] w-[29px] border border-[#dadada]" />
      <div className="h-[13px] w-[99px] border border-[#dadada]" />
      <div className="h-[13px] w-[23px] border border-[#dadada]" />
      <div className="h-[13px] w-[23px] border border-[#dadada]" />
      <div className="flex h-[13px] w-[26px] items-center justify-center border border-[#dadada]">NUM</div>
      <div className="h-[13px] w-[23px] border border-[#dadada]" />
      <div className="h-[13px] w-[23px] border border-[#dadada]" />
      <div className="h-[13px] w-[29px] border border-[#dadada]" />
      <svg width="16" height="16" viewBox="0 0 16 16" aria-hidden="true">
        <path d="M12 5h2v2h-2zM8 9h2v2H8zM12 9h2v2h-2zM4 13h2v2H4zM8 13h2v2H8zM12 13h2v2h-2z" fill="#b5b5b5" />
      </svg>
    </footer>
  );
}

export default function App() {
  return (
    <div className="h-screen bg-[#a8622c] p-px font-['Roboto','Noto_Sans',sans-serif]">
      <div className="relative flex h-full flex-col overflow-hidden border border-[#2d84cf] bg-white">
        <TitleBar />
        <MenuBar />
        <div className="flex h-[23px] overflow-hidden border-b border-[#4d78c2] bg-linear-to-b from-[#dfebfe] to-[#86abe6]">
          <StandardToolbar />
          <FormattingToolbar />
        </div>
        <FormulaBar />
        <main className="flex min-h-0 flex-1">
          <div className="relative min-w-0 flex-1 overflow-hidden">
            <Sheet />
            <SourceRanges />
            <Chart />
            <ChartToolbar />
          </div>
          <VerticalScrollbar />
        </main>
        <SheetTabs />
        <StatusBar />
        <p className="pointer-events-none absolute right-10 bottom-4 text-[24px] leading-6 font-black text-[#3f9fee] [-webkit-text-stroke:3px_#2f74a8] [paint-order:stroke_fill]">
          MIRPROGRAMM.RU
        </p>
      </div>
    </div>
  );
}
